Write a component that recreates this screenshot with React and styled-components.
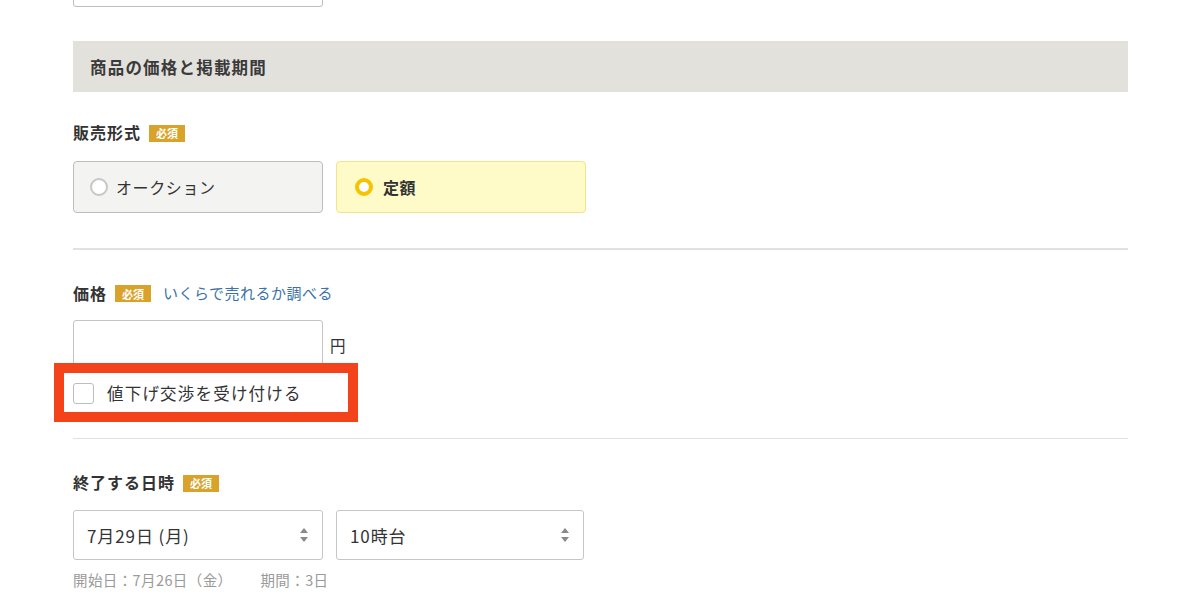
import React from "react";
import styled, { createGlobalStyle } from "styled-components";

const Global = createGlobalStyle`
  html, body { margin: 0; padding: 0; background: #fff; }
  body {
    font-family: "Noto Sans CJK JP", "Noto Sans", "Liberation Sans", sans-serif;
    color: #333;
    overflow: hidden;
  }
`;

const Page = styled.div`
  width: 1055px;
  padding-left: 73px;
  display: flex;
  flex-direction: column;
`;

const TopInput = styled.div`
  width: 250px;
  height: 50px;
  margin-top: -43px;
  box-sizing: border-box;
  border: 1px solid #bdbdbd;
  border-radius: 3px;
  background: #fff;
`;

const SectionHeader = styled.div`
  margin-top: 34px;
  height: 51px;
  background: #e3e1dc;
  display: flex;
  align-items: center;
  padding-left: 17px;
  font-size: 16.5px;
  font-weight: 700;
  color: #3a3a3a;
  letter-spacing: 1.2px;
`;

const LabelRow = styled.div`
  margin-top: ${(p) => p.$mt}px;
  height: 18px;
  display: flex;
  align-items: center;
  gap: 8px;
`;

const Label = styled.span`
  font-size: 16px;
  font-weight: 700;
  color: #333;
  letter-spacing: 1px;
  margin-top: -2px;
`;

const Badge = styled.span`
  display: inline-flex;
  align-items: center;
  justify-content: center;
  width: 36px;
  height: 17px;
  background: #d9a22b;
  color: #fff;
  font-size: 11px;
  font-weight: 700;
`;

const Link = styled.a`
  margin-left: 4px;
  margin-top: -2px;
  font-size: 15px;
  letter-spacing: 0.5px;
  color: #3b72a8;
  text-decoration: none;
`;

const ChoiceRow = styled.div`
  margin-top: 19px;
  display: flex;
  gap: 13px;
`;

const ChoiceCard = styled.div`
  width: 250px;
  height: 52px;
  box-sizing: border-box;
  border-radius: 4px;
  display: flex;
  align-items: center;
  padding-left: ${(p) => (p.$active ? 18 : 16)}px;
  gap: ${(p) => (p.$active ? 10 : 8)}px;
  background: ${(p) => (p.$active ? "#fffbc9" : "#f3f3f1")};
  border: ${(p) => (p.$active ? "1px solid #f5e38c" : "1.5px solid #bdbdbd")};
  font-size: 16px;
  letter-spacing: 0.6px;
  font-weight: ${(p) => (p.$active ? 700 : 400)};
  color: #333;
`;

const RadioDot = styled.span`
  width: 18px;
  height: 18px;
  box-sizing: border-box;
  border-radius: 50%;
  background: #fff;
  border: ${(p) => (p.$on ? "4.5px solid #f5c300" : "2px solid #c6c6c6")};
  flex: none;
`;

const Divider = styled.hr`
  margin: ${(p) => p.$mt}px 0 0;
  border: none;
  height: 1.5px;
  background: #e1e1e1;
  width: 100%;
`;

const InputRow = styled.div`
  margin-top: 17px;
  display: flex;
  align-items: center;
  gap: 7px;
`;

const TextInput = styled.div`
  width: 250px;
  height: 50px;
  box-sizing: border-box;
  border: 1px solid #c4c4c4;
  border-radius: 3px;
  background: #fff;
`;

const Unit = styled.span`
  font-size: 15.5px;
  color: #333;
`;

const CheckRow = styled.label`
  position: relative;
  margin-top: 13px;
  height: 21px;
  display: flex;
  align-items: center;
  gap: 13px;
  width: 270px;
`;

const CheckBox = styled.span`
  width: 21px;
  height: 21px;
  box-sizing: border-box;
  border: 1.5px solid #bdbdbd;
  border-radius: 3px;
  background: #fff;
  flex: none;
`;

const CheckText = styled.span`
  font-size: 16.5px;
  color: #333;
  letter-spacing: 1.2px;
  white-space: nowrap;
`;

const Highlight = styled.span`
  position: absolute;
  left: -19px;
  top: -20px;
  width: 304px;
  height: 59px;
  box-sizing: border-box;
  border: 10px solid #f4421a;
  pointer-events: none;
`;

const SelectRow = styled.div`
  margin-top: 18px;
  display: flex;
  gap: 13px;
`;

const Select = styled.div`
  width: ${(p) => p.$w}px;
  height: 50px;
  box-sizing: border-box;
  border: 1.5px solid #c6c6c6;
  border-radius: 3px;
  background: #fff;
  display: flex;
  align-items: center;
  justify-content: space-between;
  padding: 0 12px 0 13px;
  font-size: 17px;
  letter-spacing: 0.9px;
  color: #333;
`;

const Helper = styled.div`
  margin-top: 10px;
  line-height: 20px;
  font-size: 14.5px;
  letter-spacing: 0.4px;
  color: #9a9a9a;
  display: flex;
  gap: 28px;
`;

const Arrows = () => (
  <svg width="12" height="18" viewBox="0 0 12 18" aria-hidden="true">
    <path d="M6 2 L10 7 L2 7 Z" fill="#8a8a8a" />
    <path d="M6 16 L10 11 L2 11 Z" fill="#8a8a8a" />
  </svg>
);

export default function App() {
  return (
    <>
      <Global />
      <Page>
        <TopInput />
        <SectionHeader>商品の価格と掲載期間</SectionHeader>

        <LabelRow $mt={32}>
          <Label>販売形式</Label>
          <Badge>必須</Badge>
        </LabelRow>
        <ChoiceRow>
          <ChoiceCard>
            <RadioDot />
            オークション
          </ChoiceCard>
          <ChoiceCard $active>
            <RadioDot $on />
            定額
          </ChoiceCard>
        </ChoiceRow>

        <Divider $mt={35} />

        <LabelRow $mt={35}>
          <Label>価格</Label>
          <Badge>必須</Badge>
          <Link href="#">いくらで売れるか調べる</Link>
        </LabelRow>
        <InputRow>
          <TextInput />
          <Unit>円</Unit>
        </InputRow>
        <CheckRow>
          <CheckBox />
          <CheckText>値下げ交渉を受け付ける</CheckText>
          <Highlight />
        </CheckRow>

        <Divider $mt={34} />

        <LabelRow $mt={35}>
          <Label>終了する日時</Label>
          <Badge>必須</Badge>
        </LabelRow>
        <SelectRow>
          <Select $w={250}>
            <span>7月29日 (月)</span>
            <Arrows />
          </Select>
          <Select $w={248}>
            <span>10時台</span>
            <Arrows />
          </Select>
        </SelectRow>
        <Helper>
          <span>開始日：7月26日（金）</span>
          <span>期間：3日</span>
        </Helper>
      </Page>
    </>
  );
}
